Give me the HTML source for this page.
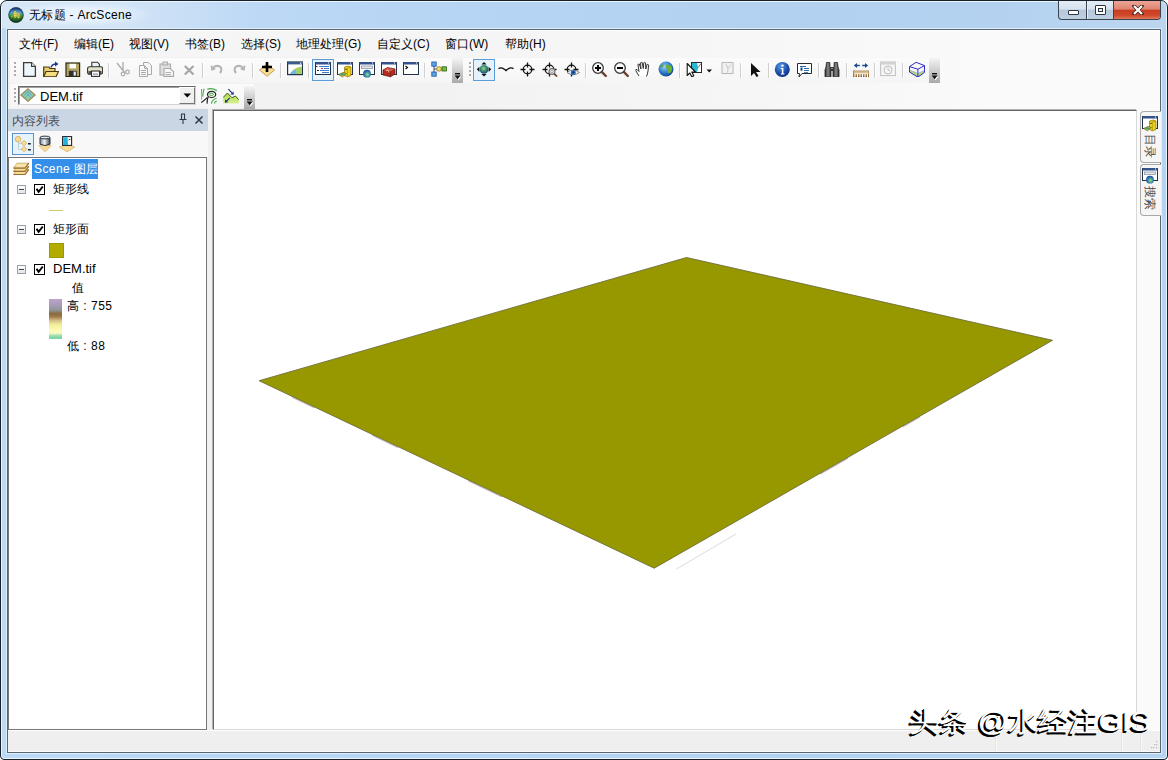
<!DOCTYPE html>
<html><head><meta charset="utf-8">
<style>
*{margin:0;padding:0;box-sizing:border-box}
html,body{width:1168px;height:760px;overflow:hidden;background:#fff;font-family:"Liberation Sans",sans-serif;font-size:12px;color:#000}
.a{position:absolute}
.menu span{position:absolute;top:36px;font-size:12px;color:#000;white-space:nowrap}
.ic{position:absolute;width:16px;height:16px;overflow:visible}
.sep{position:absolute;width:1px;background:#cfcfcf;box-shadow:1px 0 0 #fff}
.grip{position:absolute;width:2px;background:repeating-linear-gradient(#ababab 0 2px,transparent 2px 4px)}
.chk{width:11px;height:11px;border:1px solid #000;background:#fff}
.chev{position:absolute;width:11px;background:linear-gradient(#f4f4f4,#a9a9a9)}
</style></head><body>
<!-- window frame -->
<div class="a" style="left:0;top:0;width:1168px;height:760px;border:1px solid #18202a;border-radius:7px 7px 4px 4px;background:linear-gradient(90deg,#bcd9f6 0px,#b7d6f5 400px,#b3d2f2 800px,#b6d4f1 1168px);box-shadow:inset 0 0 0 1px #eaf6ff"></div>
<div class="a" style="left:6px;top:28px;width:1156px;height:726px;border:1px solid #dff0fd"></div>
<div class="a" style="left:7px;top:29px;width:1154px;height:724px;border:1px solid #5b6572;background:#f0f0f0"></div>
<!-- title -->
<div class="a" style="left:2px;top:2px;width:1164px;height:26px;background:linear-gradient(90deg,#d6e6f5 0px,#d2e4f6 120px,#bcd8f5 260px,#b6d5f4 450px,#b2d1f1 800px,#b4d2f0 1000px,#bcd6f0 1164px);border-radius:5px 5px 0 0"></div>
<div class="a" style="left:4px;top:2px;width:150px;height:25px;border-radius:12px;background:radial-gradient(ellipse at 50% 50%,rgba(235,245,255,0.85) 30%,rgba(230,242,255,0) 70%)"></div>
<svg class="a" style="left:8px;top:7px" width="16" height="16" viewBox="0 0 16 16">
 <defs><linearGradient id="appg" x1="0" y1="0" x2="0" y2="1"><stop offset="0" stop-color="#1a3a7a"/><stop offset="0.35" stop-color="#58a0d8"/><stop offset="0.55" stop-color="#4a9a38"/><stop offset="1" stop-color="#0a3a18"/></linearGradient>
 <radialGradient id="appr" cx="0.5" cy="0.5" r="0.5"><stop offset="0.7" stop-color="#000" stop-opacity="0"/><stop offset="1" stop-color="#06202a" stop-opacity="0.6"/></radialGradient></defs>
 <circle cx="8" cy="8" r="7.7" fill="url(#appg)"/>
 <ellipse cx="7.2" cy="7.4" rx="1.5" ry="3.4" fill="#e8d858"/><ellipse cx="10.4" cy="8.4" rx="1.3" ry="2.8" fill="#d8c848"/>
 <path d="M6.2 5.5 L8.2 5.5 M6.2 7.5 L8.2 7.5 M6.2 9.5 L8.2 9.5 M9.5 7 L11.3 7 M9.5 9 L11.3 9" stroke="#a89020" stroke-width="0.5"/>
 <path d="M3 9.5 L5 9" stroke="#90c050" stroke-width="1"/>
 <circle cx="8" cy="8" r="7.7" fill="url(#appr)"/>
</svg>
<div class="a" style="left:29px;top:7px;font-size:12px;letter-spacing:0.3px;color:#000;white-space:nowrap">无标题 - ArcScene</div>
<!-- caption buttons -->
<div class="a" style="left:1058px;top:1px;width:103px;height:19px;border:1px solid #3c4450;border-top:none;border-radius:0 0 4px 4px;overflow:hidden;background:linear-gradient(#e4edf6 0%,#d6e2ee 45%,#b6c9dc 50%,#bcd0e2 100%)">
  <div class="a" style="left:27px;top:0;width:1px;height:19px;background:#3c4450;box-shadow:1px 0 0 #e8f0f8"></div>
  <div class="a" style="left:54px;top:0;width:1px;height:19px;background:#3c4450"></div>
  <div class="a" style="left:55px;top:0;width:47px;height:18px;background:linear-gradient(#eba596 0%,#e08470 45%,#c83c20 52%,#d0492c 80%,#e07a5a 100%)"></div>
  <div class="a" style="left:9px;top:9px;width:11px;height:5px;border:1px solid #2c3440;border-radius:1px;background:#fff"></div>
  <div class="a" style="left:36px;top:4px;width:11px;height:10px;border:1px solid #2c3440;border-radius:1px;background:#fff"><div class="a" style="left:2px;top:2px;width:5px;height:4px;border:1px solid #2c3440;background:#e8eef4"></div></div>
  <svg class="a" style="left:73px;top:4px" width="12" height="10" viewBox="0 0 12 10"><path d="M2 1 L10 9 M10 1 L2 9" stroke="#3a2420" stroke-width="3.6" stroke-linecap="round"/><path d="M2 1 L10 9 M10 1 L2 9" stroke="#fff" stroke-width="2.2" stroke-linecap="butt"/></svg>
</div>
<!-- menu -->
<div class="a" style="left:8px;top:30px;width:1152px;height:1px;background:#fff"></div>
<div class="a" style="left:8px;top:31px;width:1152px;height:78px;background:linear-gradient(90deg,#f1f1f1 0%,#f2f2f2 35%,#f6f6f6 65%,#fafafa 85%,#fafafa 100%)"></div>
<div class="a" style="left:8px;top:31px;width:1152px;height:26px;background:linear-gradient(90deg,rgba(255,255,255,0.35),rgba(255,255,255,0))"></div>
<div class="menu">
  <span style="left:19px">文件(F)</span>
  <span style="left:74px">编辑(E)</span>
  <span style="left:129px">视图(V)</span>
  <span style="left:185px">书签(B)</span>
  <span style="left:241px">选择(S)</span>
  <span style="left:296px">地理处理(G)</span>
  <span style="left:377px">自定义(C)</span>
  <span style="left:445px">窗口(W)</span>
  <span style="left:505px">帮助(H)</span>
</div>
<!-- toolbar 1 -->
<div class="a" style="left:10px;top:58px;width:931px;height:25px;background:linear-gradient(#fbfbfb,#f5f5f5)"></div>
<!-- toolbar 2 -->
<div class="a" style="left:10px;top:84px;width:244px;height:24px;background:linear-gradient(#fbfbfb,#f5f5f5)"></div>
<div class="grip" style="left:14px;top:62px;height:16px"></div>
<div class="grip" style="left:469px;top:62px;height:16px"></div>
<div class="grip" style="left:14px;top:88px;height:16px"></div>
<div class="sep" style="left:108px;top:63px;height:15px"></div>
<div class="sep" style="left:202px;top:63px;height:15px"></div>
<div class="sep" style="left:252px;top:63px;height:15px"></div>
<div class="sep" style="left:280px;top:63px;height:15px"></div>
<div class="sep" style="left:308px;top:63px;height:15px"></div>
<div class="sep" style="left:424px;top:63px;height:15px"></div>
<div class="sep" style="left:585px;top:63px;height:15px"></div>
<div class="sep" style="left:679px;top:63px;height:15px"></div>
<div class="sep" style="left:740px;top:63px;height:15px"></div>
<div class="sep" style="left:768px;top:63px;height:15px"></div>
<div class="sep" style="left:818px;top:63px;height:15px"></div>
<div class="sep" style="left:846px;top:63px;height:15px"></div>
<div class="sep" style="left:874px;top:63px;height:15px"></div>
<div class="sep" style="left:902px;top:63px;height:15px"></div>
<div class="chev" style="left:452px;top:58px;height:25px"><div class="a" style="left:3px;top:15px;width:5px;height:1px;background:#111;box-shadow:0 0.5px 0 #333"></div><svg class="a" style="left:2px;top:17px" width="8" height="6" viewBox="0 0 8 6"><path d="M1.6 1.6 L7.4 1.6 L4.5 5.2 Z" fill="#fff"/><path d="M0.6 0.6 L6.6 0.6 L3.6 4.2 Z" fill="#111"/></svg></div>
<div class="chev" style="left:929px;top:58px;height:25px"><div class="a" style="left:3px;top:15px;width:5px;height:1px;background:#111;box-shadow:0 0.5px 0 #333"></div><svg class="a" style="left:2px;top:17px" width="8" height="6" viewBox="0 0 8 6"><path d="M1.6 1.6 L7.4 1.6 L4.5 5.2 Z" fill="#fff"/><path d="M0.6 0.6 L6.6 0.6 L3.6 4.2 Z" fill="#111"/></svg></div>
<div class="chev" style="left:244px;top:86px;height:23px"><div class="a" style="left:3px;top:13px;width:5px;height:1px;background:#111;box-shadow:0 0.5px 0 #333"></div><svg class="a" style="left:2px;top:15px" width="8" height="6" viewBox="0 0 8 6"><path d="M1.6 1.6 L7.4 1.6 L4.5 5.2 Z" fill="#fff"/><path d="M0.6 0.6 L6.6 0.6 L3.6 4.2 Z" fill="#111"/></svg></div>
<div class="a" style="left:312px;top:59px;width:22px;height:22px;border:1px solid #5c9ad8;background:#e6f2fb"></div>
<div class="a" style="left:473px;top:59px;width:22px;height:22px;border:1px solid #5c9ad8;background:#e6f2fb"></div>
<svg class="a" style="left:22px;top:61px" width="16" height="16" viewBox="0 0 16 16"><path d="M1.6 1.6 L9.6 1.6 L13.4 5.4 L13.4 15.4 L1.6 15.4 Z" fill="#eef5fb" stroke="#3c3c3c" stroke-width="1.3"/><path d="M9.6 1.6 L9.6 5.4 L13.4 5.4" fill="#fff" stroke="#3c3c3c" stroke-width="1.2"/></svg>
<svg class="a" style="left:43px;top:61px" width="16" height="16" viewBox="0 0 16 16"><path d="M0.7 15.8 L0.7 6 L6 6 L7 7.5 L12 7.5 L12 15.8 Z" fill="#e8cc70" stroke="#4a3a10" stroke-width="1.2"/><path d="M0.7 15.8 L3 10.5 L15.5 10.5 L13 15.8 Z" fill="#f4dc80" stroke="#4a3a10" stroke-width="1.2"/><path d="M8 6.5 Q9 3 13 3" stroke="#1a3a8a" stroke-width="1.3" fill="none"/><path d="M12 0.5 L15.5 3 L12 5.5 Z" fill="#1a3a8a"/></svg>
<svg class="a" style="left:65px;top:61px" width="16" height="16" viewBox="0 0 16 16"><rect x="1" y="2" width="13.6" height="13.6" fill="#b4a464" stroke="#2e2810" stroke-width="1.2"/><rect x="4.5" y="2.8" width="6.5" height="4.6" fill="#fafafa"/><rect x="3.8" y="9.8" width="8" height="5.6" fill="#303030"/><rect x="8.6" y="10.6" width="2.2" height="4" fill="#f0f0f0"/></svg>
<svg class="a" style="left:87px;top:61px" width="16" height="16" viewBox="0 0 16 16"><path d="M4.8 1.2 L10.5 1.2 L12.4 3.2 L12.4 7 L4.8 7 Z" fill="#eaf2fa" stroke="#303030" stroke-width="1.1"/><rect x="0.6" y="5.8" width="15" height="7.4" rx="2" fill="#e4e4cc" stroke="#303030" stroke-width="1.1"/><rect x="1.5" y="10" width="13" height="3" fill="#505040"/><rect x="4.5" y="10" width="8" height="5.4" fill="#fafafa" stroke="#303030" stroke-width="1.1"/><rect x="6" y="12.6" width="5" height="1" fill="#6080b0"/></svg>
<svg class="a" style="left:115px;top:61px" width="16" height="16" viewBox="0 0 16 16"><path d="M2 2 L10 12 M8 1 L8 10" stroke="#aaaaaa" stroke-width="1.3" fill="none"/><circle cx="8" cy="13" r="1.8" fill="none" stroke="#aaaaaa" stroke-width="1.2"/><circle cx="12.5" cy="11" r="1.8" fill="none" stroke="#aaaaaa" stroke-width="1.2"/></svg>
<svg class="a" style="left:138px;top:61px" width="16" height="16" viewBox="0 0 16 16"><path d="M5.5 1.5 L10.5 1.5 L13.5 4.5 L13.5 13.5 L5.5 13.5 Z" fill="#f6f6f6" stroke="#aaaaaa" stroke-width="1"/><path d="M1.5 4.5 L6.5 4.5 L9.5 7.5 L9.5 15.5 L1.5 15.5 Z" fill="#fafafa" stroke="#aaaaaa" stroke-width="1"/><path d="M6.5 4.5 L6.5 7.5 L9.5 7.5" fill="none" stroke="#aaaaaa" stroke-width="1"/><rect x="3" y="9" width="5" height="1" fill="#aaaaaa"/><rect x="3" y="11" width="5" height="1" fill="#aaaaaa"/><rect x="3" y="13" width="5" height="1" fill="#aaaaaa"/></svg>
<svg class="a" style="left:159px;top:61px" width="16" height="16" viewBox="0 0 16 16"><rect x="1" y="3" width="10.5" height="11" fill="#e0e0e0" stroke="#aaaaaa" stroke-width="1.1"/><rect x="4" y="1" width="4.5" height="3" fill="#ddd" stroke="#aaaaaa" stroke-width="1"/><path d="M5 7.5 L11 7.5 L14.5 10.5 L14.5 15.4 L5 15.4 Z" fill="#f8f8f8" stroke="#aaaaaa" stroke-width="1.1"/><path d="M6.5 11.5 L12 11.5 M6.5 13.5 L12 13.5" stroke="#aaaaaa" stroke-width="0.9"/></svg>
<svg class="a" style="left:181px;top:61px" width="16" height="16" viewBox="0 0 16 16"><path d="M3.8 5 L12.5 13.5 M12.5 5 L3.8 13.5" stroke="#a4a4a4" stroke-width="2.1"/></svg>
<svg class="a" style="left:209px;top:61px" width="16" height="16" viewBox="0 0 16 16"><path d="M4 6.5 Q8 3.5 11.5 6 Q13.5 9 11 12" stroke="#b4b4b4" stroke-width="2" fill="none"/><path d="M1.5 4 L2.5 10 L7 8 Z" fill="#b4b4b4"/></svg>
<svg class="a" style="left:231px;top:61px" width="16" height="16" viewBox="0 0 16 16"><path d="M12 6.5 Q8 3.5 4.5 6 Q2.5 9 5 12" stroke="#b4b4b4" stroke-width="2" fill="none"/><path d="M14.5 4 L13.5 10 L9 8 Z" fill="#b4b4b4"/></svg>
<svg class="a" style="left:259px;top:61px" width="16" height="16" viewBox="0 0 16 16"><path d="M0.5 9 L8 3 L15.5 9 L8 15.3 Z" fill="#f6dc94" stroke="#c8a050" stroke-width="1"/><path d="M8 1 L8 11 M3 6 L13 6" stroke="#000" stroke-width="2.6"/></svg>
<svg class="a" style="left:287px;top:61px" width="16" height="16" viewBox="0 0 16 16"><rect x="0.6" y="1" width="15" height="12.6" fill="#fff" stroke="#22324a" stroke-width="1.2"/><rect x="0.6" y="1" width="15" height="2.4" fill="#3a5a90"/><rect x="13" y="1.6" width="1.3" height="1.2" fill="#fff"/><path d="M3 13 Q7 6 15 5.5 L15 13 Z" fill="#a8d060"/><path d="M3 13 Q5 9 9 8.5 L9.5 13 Z" fill="#78b4e0"/></svg>
<svg class="a" style="left:315px;top:61px" width="16" height="16" viewBox="0 0 16 16"><rect x="0.5" y="1.5" width="15" height="12" fill="#fff" stroke="#22324a" stroke-width="1"/><rect x="0.5" y="1" width="15" height="2.5" fill="#34538a"/><rect x="13" y="1.5" width="1" height="1" fill="#fff"/><rect x="1" y="5" width="1.5" height="1" fill="#223"/><rect x="4" y="5" width="10" height="1" fill="#3a7ad0"/><rect x="6" y="7" width="2" height="1" fill="#d03030"/><rect x="9" y="7" width="5" height="1" fill="#3a7ad0"/><rect x="2" y="9" width="2" height="1" fill="#223"/><rect x="5" y="9" width="9" height="1" fill="#3a7ad0"/><rect x="7" y="11" width="7" height="1" fill="#3a7ad0"/></svg>
<svg class="a" style="left:337px;top:61px" width="16" height="17" viewBox="0 0 16 17"><rect x="0.5" y="1.5" width="15" height="12" fill="#fff" stroke="#22324a" stroke-width="1"/><rect x="0.5" y="1" width="15" height="2.5" fill="#34538a"/><rect x="13" y="1.5" width="1" height="1" fill="#fff"/><path d="M7.5 6 L11 5 L14 6 L14 14.5 L10.5 15.8 L7.5 14.5 Z" fill="#e8d020" stroke="#8a7000" stroke-width="0.7"/><path d="M10.5 6.8 L14 6 M10.5 6.8 L10.5 15.8" stroke="#b09a00" stroke-width="0.7"/><rect x="8.2" y="7.8" width="1.8" height="1" fill="#504000"/><path d="M1.5 13.5 L6 11.5 L9.5 12.5 L5.5 15.8 Z" fill="#e0d030" stroke="#6a5a00" stroke-width="0.7"/><ellipse cx="5.5" cy="13.4" rx="2.4" ry="1.1" fill="#3aa080"/></svg>
<svg class="a" style="left:359px;top:61px" width="16" height="17" viewBox="0 0 16 17"><rect x="0.5" y="1.5" width="15" height="12" fill="#fff" stroke="#22324a" stroke-width="1"/><rect x="0.5" y="1" width="15" height="2.5" fill="#34538a"/><rect x="13" y="1.5" width="1" height="1" fill="#fff"/><rect x="2.5" y="5" width="11" height="2.5" fill="#e4e8ec" stroke="#8a96a4" stroke-width="0.8"/><defs><radialGradient id="sglb" cx="0.55" cy="0.6" r="0.6"><stop offset="0" stop-color="#a8e060"/><stop offset="0.5" stop-color="#3a90b0"/><stop offset="1" stop-color="#1a4a9a"/></radialGradient></defs><circle cx="8" cy="12.7" r="3.9" fill="url(#sglb)"/></svg>
<svg class="a" style="left:381px;top:61px" width="16" height="17" viewBox="0 0 16 17"><rect x="0.5" y="1.5" width="15" height="12" fill="#fff" stroke="#22324a" stroke-width="1"/><rect x="0.5" y="1" width="15" height="2.5" fill="#34538a"/><rect x="13" y="1.5" width="1" height="1" fill="#fff"/><path d="M2 9 L6.5 6.5 L14 8 L14 13 L9.5 15.8 L2 14 Z" fill="#b82a1e" stroke="#5a1008" stroke-width="0.7"/><path d="M2 9 L9.5 10.8 L14 8 M9.5 10.8 L9.5 15.8" stroke="#7a1a10" stroke-width="0.7" fill="none"/><path d="M2.5 9.2 L6.5 7 L13.5 8.3 L9.5 10.5 Z" fill="#d85a48"/><path d="M5 10 L7 9 L8 11.5" stroke="#f0d0c8" stroke-width="0.8" fill="none"/></svg>
<svg class="a" style="left:403px;top:61px" width="16" height="16" viewBox="0 0 16 16"><rect x="0.5" y="1.5" width="15" height="12" fill="#fff" stroke="#22324a" stroke-width="1"/><rect x="0.5" y="1" width="15" height="2.5" fill="#34538a"/><rect x="13" y="1.5" width="1" height="1" fill="#fff"/><path d="M2.5 5 L4.5 6.5 L2.5 8" stroke="#111" stroke-width="1.2" fill="none"/></svg>
<svg class="a" style="left:431px;top:61px" width="16" height="16" viewBox="0 0 16 16"><path d="M3 3 L3 13.5 M3 8 L9 8 L14 8" stroke="#405060" stroke-width="1"/><rect x="0.8" y="1" width="4.4" height="4.2" fill="#58a8e8" stroke="#2050a0" stroke-width="0.8"/><rect x="0.8" y="11" width="4.4" height="4.2" fill="#58a8e8" stroke="#2050a0" stroke-width="0.8"/><rect x="5.8" y="5.8" width="4.4" height="4.2" rx="1.5" fill="#f0e070" stroke="#907020" stroke-width="0.8"/><rect x="11" y="5.8" width="4.4" height="4.2" fill="#70c040" stroke="#306010" stroke-width="0.8"/></svg>
<svg class="a" style="left:476px;top:61px" width="16" height="16" viewBox="0 0 16 16"><defs><radialGradient id="navg" cx="0.45" cy="0.4" r="0.6"><stop offset="0" stop-color="#a0d868"/><stop offset="0.55" stop-color="#3a8a78"/><stop offset="1" stop-color="#1a4a80"/></radialGradient></defs><path d="M8 1 L10.6 3.6 L5.4 3.6 Z M8 15.6 L10.6 13 L5.4 13 Z M0.8 8.3 L3.4 5.7 L3.4 10.9 Z M15.2 8.3 L12.6 5.7 L12.6 10.9 Z" fill="#111"/><circle cx="8" cy="8.3" r="4.4" fill="url(#navg)"/></svg>
<svg class="a" style="left:498px;top:61px" width="16" height="16" viewBox="0 0 16 16"><path d="M0.5 7.6 Q2.5 6.2 4.5 7.2 Q6.5 8.2 8 9.6 Q9.5 8.2 11.5 7.2 Q13.5 6.2 15.5 7.6" stroke="#111" stroke-width="1.3" fill="none"/><path d="M6.8 8.8 L8 10.3 L9.2 8.8 Z" fill="#111"/></svg>
<svg class="a" style="left:520px;top:61px" width="16" height="16" viewBox="0 0 16 16"><circle cx="7.5" cy="8.5" r="4.3" stroke="#111" stroke-width="1.2" fill="none"/><path d="M7.5 1.5 L7.5 6.5 M7.5 10.5 L7.5 15.5 M0.5 8.5 L5.5 8.5 M9.5 8.5 L14.5 8.5" stroke="#111" stroke-width="1.3"/></svg>
<svg class="a" style="left:542px;top:61px" width="16" height="16" viewBox="0 0 16 16"><circle cx="7.5" cy="8.5" r="4.3" stroke="#111" stroke-width="1.2" fill="none"/><path d="M7.5 1.5 L7.5 6.5 M7.5 10.5 L7.5 15.5 M0.5 8.5 L5.5 8.5 M9.5 8.5 L14.5 8.5" stroke="#111" stroke-width="1.3"/><circle cx="10" cy="10.5" r="2.9" fill="#f0f0f0" stroke="#707070" stroke-width="1.1"/><circle cx="10" cy="10.5" r="1.3" fill="none" stroke="#909090" stroke-width="0.8"/><path d="M12.2 12.7 L15 15.5" stroke="#6a3a28" stroke-width="1.7"/></svg>
<svg class="a" style="left:564px;top:61px" width="16" height="16" viewBox="0 0 16 16"><circle cx="7.5" cy="8.5" r="4.3" stroke="#111" stroke-width="1.2" fill="none"/><path d="M7.5 1.5 L7.5 6.5 M7.5 10.5 L7.5 15.5 M0.5 8.5 L5.5 8.5 M9.5 8.5 L14.5 8.5" stroke="#111" stroke-width="1.3"/><path d="M3 11.5 Q9 6.5 15.5 11.5 Q9 16 3 11.5 Z" fill="#eef3f8" stroke="#707070" stroke-width="0.8"/><circle cx="9.3" cy="11.4" r="2.5" fill="#2a6ab8"/><rect x="8.5" y="10.6" width="1.6" height="1.6" fill="#0e2a50"/></svg>
<svg class="a" style="left:591px;top:61px" width="16" height="16" viewBox="0 0 16 16"><circle cx="7" cy="7" r="5.3" fill="#fafafa" stroke="#3a3a3a" stroke-width="1.3"/><path d="M10.8 10.8 L14.8 15" stroke="#6a4030" stroke-width="2.4" stroke-linecap="round"/><path d="M4 7 L10 7 M7 4 L7 10" stroke="#000" stroke-width="2"/></svg>
<svg class="a" style="left:613px;top:61px" width="16" height="16" viewBox="0 0 16 16"><circle cx="7" cy="7" r="5.3" fill="#fafafa" stroke="#3a3a3a" stroke-width="1.3"/><path d="M10.8 10.8 L14.8 15" stroke="#6a4030" stroke-width="2.4" stroke-linecap="round"/><path d="M4 7 L10 7" stroke="#000" stroke-width="2"/></svg>
<svg class="a" style="left:635px;top:61px" width="16" height="16" viewBox="0 0 16 16"><path d="M4 15 Q2 12 0.8 9.5 Q0.5 8 2 8.5 L4 10.5 L3 4 Q3 2.5 4.3 3 L6 8 L5.5 2 Q6 0.8 7.2 1.5 L8.3 7.5 L8.8 1.8 Q9.5 0.8 10.5 1.8 L10.8 8 L12 3.5 Q13 2.8 13.6 4 L13 10 Q12.5 13 11.5 15.5" fill="#fff" stroke="#333" stroke-width="1"/></svg>
<svg class="a" style="left:658px;top:61px" width="16" height="16" viewBox="0 0 16 16"><defs><radialGradient id="glb" cx="0.4" cy="0.35" r="0.7"><stop offset="0" stop-color="#9ad0f8"/><stop offset="0.6" stop-color="#2a78c8"/><stop offset="1" stop-color="#12408a"/></radialGradient></defs><circle cx="8" cy="8" r="7.5" fill="url(#glb)"/><path d="M8 4 Q12 3 14 6 Q14.5 10 12 12 Q9.5 13 9 10 Q10 8 8 7 Z" fill="#68b038"/><path d="M2 5 Q4 3 6 3.5 Q5 6 3 6.5 Z" fill="#58a030"/></svg>
<svg class="a" style="left:686px;top:61px" width="16" height="16" viewBox="0 0 16 16"><rect x="5.5" y="1.5" width="10" height="10" fill="#fff" stroke="#2a2a2a" stroke-width="1"/><path d="M6 2 L11 2 L12.2 6.5 L11 11 L6 11 Z" fill="#28b8d0"/><path d="M12.2 6.5 L15 2.5" stroke="#555" stroke-width="0.8"/><path d="M1.2 2.5 L1.2 14.5 L3.8 12 L5.8 15.8 L7.8 14.8 L5.8 11 L9.5 11 Z" fill="#fff" stroke="#111" stroke-width="1.1" stroke-linejoin="round"/></svg>
<svg class="a" style="left:706px;top:69px" width="7" height="4" viewBox="0 0 7 4"><path d="M0.5 0.5 L6 0.5 L3.25 3.5 Z" fill="#111"/></svg>
<svg class="a" style="left:719px;top:61px" width="16" height="16" viewBox="0 0 16 16"><rect x="3" y="1.5" width="11" height="11" fill="#f2f2f2" stroke="#bcbcbc" stroke-width="1.1"/><path d="M7 3 L9 7.5 L8.5 11.5 M9 7.5 L12 3.5" stroke="#c4c4c4" stroke-width="0.9" fill="none"/></svg>
<svg class="a" style="left:748px;top:61px" width="16" height="16" viewBox="0 0 16 16"><path d="M3 2 L3 15 L6 12 L8.5 16 L10.5 15 L8 11 L12.5 11 Z" fill="#111"/></svg>
<svg class="a" style="left:774px;top:61px" width="16" height="16" viewBox="0 0 16 16"><defs><radialGradient id="idg" cx="0.4" cy="0.3" r="0.8"><stop offset="0" stop-color="#5a9ae0"/><stop offset="0.6" stop-color="#1a4aa8"/><stop offset="1" stop-color="#0a2a78"/></radialGradient></defs><circle cx="8.3" cy="8.4" r="7.5" fill="url(#idg)"/><circle cx="8.5" cy="4.6" r="1.2" fill="#fff"/><path d="M6.8 7 L9.4 7 L9.4 12.4 L10.4 12.4 L10.4 13.4 L6.8 13.4 L6.8 12.4 L7.8 12.4 L7.8 8 L6.8 8 Z" fill="#fff"/></svg>
<svg class="a" style="left:796px;top:61px" width="16" height="16" viewBox="0 0 16 16"><path d="M1.5 2.5 L15.5 2.5 L15.5 12.5 L6 12.5 L3 16 L3.5 12.5 L1.5 12.5 Z" fill="#fff" stroke="#2a2a2a" stroke-width="1"/><rect x="4" y="5" width="6" height="1" fill="#2a6ab0"/><rect x="4.5" y="6.5" width="2" height="3.2" fill="#1a4a80"/><rect x="8" y="7" width="5" height="1" fill="#2a6ab0"/><rect x="8" y="9" width="5" height="1" fill="#2a6ab0"/><rect x="8" y="11" width="4" height="0.8" fill="#2a6ab0"/></svg>
<svg class="a" style="left:824px;top:61px" width="16" height="16" viewBox="0 0 16 16"><defs><linearGradient id="bing" x1="0" y1="0" x2="1" y2="0"><stop offset="0" stop-color="#2a2a2a"/><stop offset="0.5" stop-color="#8a8a8a"/><stop offset="1" stop-color="#2a2a2a"/></linearGradient></defs><path d="M2.5 1.5 L5.8 1.5 L6 6 L7 7 L7 15.8 L1 15.8 L1 9 L2 6 Z" fill="url(#bing)" stroke="#222" stroke-width="0.8"/><path d="M13.5 1.5 L10.2 1.5 L10 6 L9 7 L9 15.8 L15 15.8 L15 9 L14 6 Z" fill="url(#bing)" stroke="#222" stroke-width="0.8"/><rect x="6.5" y="6" width="3" height="4" fill="#3a3a3a"/><rect x="7.5" y="7" width="1" height="1" fill="#ccc"/></svg>
<svg class="a" style="left:853px;top:61px" width="16" height="16" viewBox="0 0 16 16"><defs><linearGradient id="rul" x1="0" y1="0" x2="0" y2="1"><stop offset="0" stop-color="#f8e4b0"/><stop offset="1" stop-color="#8a5a28"/></linearGradient></defs><path d="M3 4.5 L6.8 4.5 M9.2 4.5 L13 4.5" stroke="#1a4a88" stroke-width="1.4"/><path d="M0.8 4.5 L4 2 L4 7 Z M15.2 4.5 L12 2 L12 7 Z" fill="#1a4a88"/><rect x="0.5" y="10" width="15.5" height="6" fill="url(#rul)" stroke="#7a5020" stroke-width="0.6"/><path d="M2 16 L2 12.5 M4.5 16 L4.5 12.5 M7 16 L7 12.5 M9.5 16 L9.5 12.5 M12 16 L12 12.5 M14.5 16 L14.5 12.5" stroke="#fff" stroke-width="1"/><path d="M1.5 12.5 L15 12.5" stroke="#fff" stroke-width="0.6"/></svg>
<svg class="a" style="left:880px;top:61px" width="16" height="16" viewBox="0 0 16 16"><rect x="0.6" y="1" width="15" height="13.6" fill="#f4f4f4" stroke="#c4c4c4" stroke-width="1.1"/><rect x="0.6" y="1" width="15" height="2.6" fill="#d4d4d4"/><circle cx="8" cy="9" r="4" fill="none" stroke="#c0c0c0" stroke-width="1"/><path d="M8 6.5 L8 9 L10 10" stroke="#c0c0c0" fill="none"/></svg>
<svg class="a" style="left:909px;top:61px" width="16" height="16" viewBox="0 0 16 16"><path d="M0.5 11 L8.9 16.2 L15.5 11.4 L15.5 9.5 L8.9 12.5 L0.5 9 Z" fill="#b4dc78"/><path d="M7.1 1.3 L15.5 4.6 L8.9 8.2 L0.5 5.6 Z M0.5 5.6 L0.5 11 L8.9 16.2 L15.5 11.4 L15.5 4.6 M8.9 8.2 L8.9 16.2" fill="none" stroke="#2a2ac8" stroke-width="1"/><path d="M0.5 9 L8.9 12.4 L15.5 9.5" fill="none" stroke="#8a8ae0" stroke-width="0.6"/></svg>
<div class="a" style="left:18px;top:86px;width:178px;height:19px;border:1px solid #6a6a6a;border-right-color:#d4d4d4;border-bottom-color:#d4d4d4;box-shadow:inset 1px 1px 0 #a0a0a0;background:#fff"></div>
<div class="a" style="left:179px;top:87px;width:16px;height:17px;background:#f0f0f0;border:1px solid #fff;border-right-color:#777;border-bottom-color:#777"></div>
<svg class="a" style="left:183px;top:93px" width="9" height="5" viewBox="0 0 9 5"><path d="M0.5 0.5 L8 0.5 L4.25 4.5 Z" fill="#000"/></svg>
<svg class="a" style="left:20px;top:88px" width="16" height="14" viewBox="0 0 16 14"><path d="M8 0.8 L15.2 7 L8 13.2 L0.8 7 Z" fill="#90d0a0" stroke="#a08050" stroke-width="1.1"/><path d="M4.5 4 L11.5 10 M6.5 2.5 L13 8.5 M11.5 4 L4.5 10 M9.5 2.5 L3 8.5" stroke="#5aa8d8" stroke-width="0.9"/></svg>
<div class="a" style="left:40px;top:89px;font-size:13px;white-space:nowrap;color:#000">DEM.tif</div>
<svg class="a" style="left:201px;top:88px" width="16" height="16" viewBox="0 0 16 16"><path d="M6.2 1.3 Q11 -0.6 15.9 2.7 M0.6 1 Q-0.3 6 0.3 11.5 M3.2 0.8 Q1.6 4.5 1.8 8.8 M10.4 15.6 Q11 11.5 15.6 10.2 M13.4 15.6 Q13.6 13.6 15.9 13" stroke="#4aa84a" stroke-width="1.1" fill="none"/><ellipse cx="10.3" cy="6.4" rx="2.1" ry="1.05" fill="none" stroke="#4aa84a" stroke-width="1"/><ellipse cx="10.6" cy="6.4" rx="4.1" ry="3.1" stroke="#222" stroke-width="1.2" fill="none"/><path d="M0.3 14.6 Q3 12.6 6.2 9.6 M6.2 15.6 Q5.9 11.5 7.2 8.7" stroke="#222" stroke-width="1.2" fill="none"/></svg>
<svg class="a" style="left:223px;top:88px" width="16" height="16" viewBox="0 0 16 16"><defs><linearGradient id="mtg" x1="0" y1="0" x2="0" y2="1"><stop offset="0" stop-color="#b0d850"/><stop offset="1" stop-color="#d8f090"/></linearGradient></defs><path d="M0.2 9.5 L4.4 5 L9 9.8 L12.4 8 L15.8 11.7 L15.8 15.6 L0.2 15.6 Z" fill="url(#mtg)"/><path d="M0.2 9.5 L4.4 5 L9 9.8 L12.4 8 L15.8 11.7" fill="none" stroke="#3a5a18" stroke-width="1"/><path d="M5.4 1.2 L9.6 5.6 M6.7 10 L3 13.6" stroke="#1a3a80" stroke-width="1.2"/><path d="M10.8 6.8 L10.6 3.4 L7.4 6.6 Z M1.8 14.8 L2.2 11.2 L5.2 14.2 Z" fill="#1a3a80"/></svg>


<!-- TOC header -->
<div class="a" style="left:8px;top:109px;width:200px;height:22px;background:#cad6e3"></div>
<div class="a" style="left:12px;top:113px;font-size:12px;color:#464c56">内容列表</div>
<!-- TOC list -->
<div class="a" style="left:8px;top:157px;width:199px;height:573px;border:1px solid #777;background:#fff"></div>
<!-- scene view -->
<div class="a" style="left:213px;top:110px;width:924px;height:620px;border:1px solid #d8d8d8;border-left:1px solid #666;border-top:1px solid #666;background:#fff;box-shadow:-1px -1px 0 #b0b0b0"></div>
<!-- right tab strip -->
<div class="a" style="left:1137px;top:108px;width:23px;height:622px;background:#fafafa"></div>
<!-- status bar -->
<div class="a" style="left:8px;top:730px;width:1152px;height:22px;background:#efefef;border-top:1px solid #fff;border-bottom:1px solid #fafafa"></div>

<!-- TOC toolbar -->
<div class="a" style="left:8px;top:131px;width:200px;height:26px;background:#f8f8f8"></div>
<div class="a" style="left:12px;top:133px;width:22px;height:22px;border:1px solid #5c92d2;background:#e5f3fb"></div>
<svg class="a" style="left:14px;top:136px" width="18" height="17" viewBox="0 0 18 17">
 <path d="M4.5 5.5 L4.5 13.5 L8 13.5 M4.5 7.5 L8 7.5" stroke="#c4ccd4" stroke-width="1" fill="none"/>
 <circle cx="4" cy="3.2" r="2.8" fill="#f6dc98" stroke="#dcb060" stroke-width="0.9"/>
 <path d="M10 4.4 L12.7 7.1 L10 9.8 L7.3 7.1 Z" fill="#f6dc98" stroke="#dcb060" stroke-width="0.9"/>
 <path d="M10 10.4 L12.7 13.1 L10 15.8 L7.3 13.1 Z" fill="#f6dc98" stroke="#dcb060" stroke-width="0.9"/>
 <rect x="14" y="7" width="2.8" height="1.5" fill="#20242a"/><rect x="14" y="13" width="2.8" height="1.5" fill="#20242a"/>
</svg>
<svg class="a" style="left:38px;top:135px" width="14" height="17" viewBox="0 0 14 17">
 <defs><linearGradient id="dbg"><stop offset="0" stop-color="#7a8898"/><stop offset="0.45" stop-color="#eef2f6"/><stop offset="1" stop-color="#3a4652"/></linearGradient></defs>
 <path d="M1 10.6 L13 10.6 L7 16.8 Z" fill="#f8dc98" stroke="#dcb468" stroke-width="0.8"/>
 <path d="M2 2.5 L2 9.2 Q7 11.8 12 9.2 L12 2.5 Z" fill="url(#dbg)" stroke="#1e2630" stroke-width="0.9"/>
 <ellipse cx="7" cy="2.5" rx="5" ry="1.4" fill="#dfe6ee" stroke="#1e2630" stroke-width="0.9"/>
</svg>
<svg class="a" style="left:58px;top:135px" width="18" height="17" viewBox="0 0 18 17">
 <path d="M1.2 12 L9 9.7 L16.8 12 L9 16.8 Z" fill="#f8dc98" stroke="#dcb468" stroke-width="0.8"/>
 <rect x="4.6" y="1.6" width="9" height="8.8" fill="#fff" stroke="#22262c" stroke-width="1.1"/>
 <path d="M5.2 2.2 L9.5 2.2 L10 10 L5.2 10 Z" fill="#22b4d8"/>
 <path d="M10.5 5 L12.5 4.2" stroke="#333" stroke-width="1"/>
</svg>
<!-- header pin & close -->
<svg class="a" style="left:178px;top:113px" width="10" height="12" viewBox="0 0 10 12"><path d="M3 1 L7 1 M3.5 1 L3.5 6 M6.5 1 L6.5 6 M1.5 6.5 L8.5 6.5 M5 7 L5 11" stroke="#303848" stroke-width="1.1" fill="none"/></svg>
<svg class="a" style="left:194px;top:115px" width="10" height="10" viewBox="0 0 10 10"><path d="M1.5 1.5 L8.5 8.5 M8.5 1.5 L1.5 8.5" stroke="#303848" stroke-width="1.5"/></svg>
<!-- TOC items -->
<svg class="a" style="left:13px;top:162px" width="17" height="14" viewBox="0 0 17 14">
 <path d="M4 7.6 L15.8 7.6 L12 12.5 L0.5 12.5 Z" fill="#f4dc98" stroke="#c8a058" stroke-width="0.8"/><path d="M0.5 12.5 L12 12.5 L15.8 7.6" fill="none" stroke="#9a7030" stroke-width="1.2"/>
 <path d="M4 4.4 L15.8 4.4 L12 9.3 L0.5 9.3 Z" fill="#f6e0a0" stroke="#c8a058" stroke-width="0.8"/><path d="M0.5 9.3 L12 9.3 L15.8 4.4" fill="none" stroke="#9a7030" stroke-width="1.2"/>
 <path d="M4 1.2 L15.8 1.2 L12 6.1 L0.5 6.1 Z" fill="#f8e4a8" stroke="#c8a058" stroke-width="0.8"/><path d="M0.5 6.1 L12 6.1 L15.8 1.2" fill="none" stroke="#9a7030" stroke-width="1.2"/>
</svg>
<div class="a" style="left:32px;top:159px;width:66px;height:20px;background:#338fe9"></div>
<div class="a" style="left:34px;top:161px;font-size:12px;letter-spacing:0.4px;color:#fff;white-space:nowrap">Scene 图层</div>

<div class="a" style="left:17px;top:185px;width:9px;height:9px;border:1px solid #9aa0a8;background:linear-gradient(#fff,#e0e4ea)"><div class="a" style="left:1px;top:3px;width:5px;height:1px;background:#3c4450"></div></div>
<div class="a chk" style="left:34px;top:184px"><svg class="a" style="left:0;top:0" width="9" height="9" viewBox="0 0 9 9"><path d="M1.5 3.8 L3.6 6.9 L7.8 1.5" stroke="#000" stroke-width="2" fill="none" stroke-linejoin="miter"/></svg></div>
<div class="a" style="left:53px;top:181px;font-size:12px;white-space:nowrap">矩形线</div>
<div class="a" style="left:49px;top:210px;width:14px;height:1px;background:#d0c860"></div>

<div class="a" style="left:17px;top:225px;width:9px;height:9px;border:1px solid #9aa0a8;background:linear-gradient(#fff,#e0e4ea)"><div class="a" style="left:1px;top:3px;width:5px;height:1px;background:#3c4450"></div></div>
<div class="a chk" style="left:34px;top:224px"><svg class="a" style="left:0;top:0" width="9" height="9" viewBox="0 0 9 9"><path d="M1.5 3.8 L3.6 6.9 L7.8 1.5" stroke="#000" stroke-width="2" fill="none" stroke-linejoin="miter"/></svg></div>
<div class="a" style="left:53px;top:221px;font-size:12px;white-space:nowrap">矩形面</div>
<div class="a" style="left:49px;top:243px;width:15px;height:15px;background:#b2ac00;border:1px solid #9d9800"></div>

<div class="a" style="left:17px;top:265px;width:9px;height:9px;border:1px solid #9aa0a8;background:linear-gradient(#fff,#e0e4ea)"><div class="a" style="left:1px;top:3px;width:5px;height:1px;background:#3c4450"></div></div>
<div class="a chk" style="left:34px;top:264px"><svg class="a" style="left:0;top:0" width="9" height="9" viewBox="0 0 9 9"><path d="M1.5 3.8 L3.6 6.9 L7.8 1.5" stroke="#000" stroke-width="2" fill="none" stroke-linejoin="miter"/></svg></div>
<div class="a" style="left:53px;top:261px;font-size:13px;white-space:nowrap">DEM.tif</div>
<div class="a" style="left:72px;top:280px;font-size:12px;white-space:nowrap">值</div>
<div class="a" style="left:49px;top:299px;width:13px;height:40px;background:linear-gradient(#baa6cc 0%,#aa9cb8 14%,#8e979c 27%,#8a6a3e 37%,#a07a48 44%,#d4c088 54%,#f4ee98 64%,#fdfcb8 80%,#f0f8c0 86%,#98dcb0 92%,#78d0a4 100%)"></div>
<div class="a" style="left:67px;top:298px;font-size:12px;letter-spacing:0.5px;white-space:nowrap">高 : 755</div>
<div class="a" style="left:67px;top:338px;font-size:12px;letter-spacing:0.5px;white-space:nowrap">低 : 88</div>


<!-- right tabs -->
<div class="a" style="left:1140px;top:111px;width:21px;height:52px;border:1px solid #a9a9a9;border-right:none;border-radius:4px 0 0 4px;background:#f6f6f6"></div>
<div class="a" style="left:1140px;top:164px;width:21px;height:52px;border:1px solid #a9a9a9;border-right:none;border-radius:4px 0 0 4px;background:#f6f6f6"></div>
<svg class="a" style="left:1142px;top:115px" width="16" height="17" viewBox="0 0 16 17"><rect x="0.5" y="1.5" width="15" height="12" fill="#fff" stroke="#22324a" stroke-width="1"/><rect x="0.5" y="1" width="15" height="2.5" fill="#34538a"/><rect x="13" y="1.5" width="1" height="1" fill="#fff"/><path d="M7.5 6 L11 5 L14 6 L14 14.5 L10.5 15.8 L7.5 14.5 Z" fill="#e8d020" stroke="#8a7000" stroke-width="0.7"/><path d="M10.5 6.8 L14 6 M10.5 6.8 L10.5 15.8" stroke="#b09a00" stroke-width="0.7"/><rect x="8.2" y="7.8" width="1.8" height="1" fill="#504000"/><path d="M1.5 13.5 L6 11.5 L9.5 12.5 L5.5 15.8 Z" fill="#e0d030" stroke="#6a5a00" stroke-width="0.7"/><ellipse cx="5.5" cy="13.4" rx="2.4" ry="1.1" fill="#3aa080"/></svg>
<svg class="a" style="left:1142px;top:167px" width="16" height="17" viewBox="0 0 16 17"><rect x="0.5" y="1.5" width="15" height="12" fill="#fff" stroke="#22324a" stroke-width="1"/><rect x="0.5" y="1" width="15" height="2.5" fill="#34538a"/><rect x="13" y="1.5" width="1" height="1" fill="#fff"/><rect x="2.5" y="5" width="11" height="2.5" fill="#e4e8ec" stroke="#8a96a4" stroke-width="0.8"/><defs><radialGradient id="sglb2" cx="0.55" cy="0.6" r="0.6"><stop offset="0" stop-color="#a8e060"/><stop offset="0.5" stop-color="#3a90b0"/><stop offset="1" stop-color="#1a4a9a"/></radialGradient></defs><circle cx="8" cy="12.7" r="3.9" fill="url(#sglb2)"/></svg>
<div class="a" style="left:1142px;top:134px;width:16px;height:26px;writing-mode:vertical-rl;text-orientation:sideways;font-size:12px;color:#444;white-space:nowrap">目录</div>
<div class="a" style="left:1142px;top:186px;width:16px;height:26px;writing-mode:vertical-rl;text-orientation:sideways;font-size:12px;color:#444;white-space:nowrap">搜索</div>
<!-- status grip -->
<div class="a" style="left:995px;top:731px;width:1px;height:20px;background:#e4e4e4;box-shadow:1px 0 0 #f8f8f8"></div>
<div class="a" style="left:1121px;top:731px;width:1px;height:20px;background:#e4e4e4;box-shadow:1px 0 0 #f8f8f8"></div>
<div class="a" style="left:1140px;top:731px;width:1px;height:20px;background:#e4e4e4;box-shadow:1px 0 0 #f8f8f8"></div>
<svg class="a" style="left:1148px;top:740px" width="11" height="11" viewBox="0 0 11 11"><g fill="#b8b8b8"><rect x="8" y="1" width="1.2" height="1.2"/><rect x="6" y="4" width="1.2" height="1.2"/><rect x="8" y="4" width="1.2" height="1.2"/><rect x="3" y="7" width="1.2" height="1.2"/><rect x="5" y="7" width="1.2" height="1.2"/><rect x="8" y="7" width="1.2" height="1.2"/></g></svg>
<!-- plane -->
<svg class="a" style="left:0;top:0" width="1168" height="760" viewBox="0 0 1168 760">
 <path d="M676.5 569 L736 534" stroke="#e4e4e4" stroke-width="1.2"/><path d="M292 397.3 L314 407.8" stroke="#c8c0c8" stroke-width="1.2"/><path d="M372 435.3 L398 447.6" stroke="#c8c0c8" stroke-width="1.2"/><path d="M468 480.8 L502 497.0" stroke="#c8c0c8" stroke-width="1.2"/><path d="M820 474.3 L848 458.3" stroke="#c8c0c8" stroke-width="1.2"/><path d="M903 426.8 L920 417.1" stroke="#c8c0c8" stroke-width="1.2"/>
 <polygon points="686.5,257.5 1052.5,340.3 654.2,568.2 259.1,380.7" fill="#979700" stroke="#6e6e3a" stroke-width="0.9"/>
</svg>

<!-- watermark -->
<div class="a" style="left:909px;top:703px;font-size:28px;color:#fff;white-space:nowrap;text-shadow:-1px 1px 0 #000,-1.5px 1.5px 0 #000,-2px 2px 0 #000;transform-origin:0 0;transform:scaleX(1.075)">头条 @水经注GIS</div>
</body></html>
